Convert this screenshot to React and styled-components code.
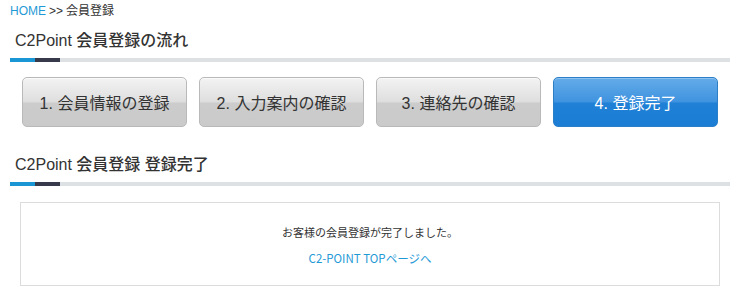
import React from "react";
import styled, { createGlobalStyle } from "styled-components";

const Global = createGlobalStyle`
  html, body { margin: 0; padding: 0; background: #fff; }
  body { font-family: "Liberation Sans", "Noto Sans CJK JP", sans-serif; color: #333; }
`;

const Page = styled.div`
  width: 720px;
  padding: 0 8px 0 10px;
`;

const Breadcrumb = styled.div`
  height: 22px;
  display: flex;
  align-items: center;
  font-size: 12px;
  color: #333;
  line-height: 22px;
  a { color: #1f9ad6; text-decoration: none; }
  span { margin: 0 3px; }
`;

const Heading = styled.div`
  padding-top: ${(p) => p.$top}px;
`;

const HeadingText = styled.h2`
  margin: 0;
  padding-left: 5px;
  font-size: 16px;
  font-weight: 500;
  color: #333;
  height: 34px;
  line-height: 34px;
`;

const Bar = styled.div`
  display: flex;
  height: 4px;
  background: #dde1e3;
`;

const BarSeg = styled.div`
  width: 25px;
  background: ${(p) => p.$c};
`;

const Steps = styled.div`
  display: flex;
  gap: 12px;
  padding: 15px 12px 0;
`;

const Step = styled.div`
  width: 165px;
  height: 50px;
  box-sizing: border-box;
  border-radius: 5px;
  display: flex;
  align-items: center;
  justify-content: center;
  font-size: 16px;
  border: 1px solid ${(p) => (p.$active ? "#2a7fc8" : "#b9b9b9")};
  color: ${(p) => (p.$active ? "#fff" : "#333")};
  background: ${(p) =>
    p.$active
      ? "linear-gradient(to bottom, #64abe9 0%, #3f93df 50%, #1f80d6 52%, #1c7dd5 100%)"
      : "linear-gradient(to bottom, #f3f3f3 0%, #dedede 50%, #cccccc 52%, #cacaca 100%)"};
  box-shadow: inset 0 1px 0 ${(p) => (p.$active ? "#8cc3f0" : "#fafafa")};
`;

const Box = styled.div`
  margin: 16px 10px 0 10px;
  height: 84px;
  box-sizing: border-box;
  border: 1px solid #dcdcdc;
  display: flex;
  flex-direction: column;
  align-items: center;
  padding-top: 20px;
  font-family: "Noto Sans CJK JP", sans-serif;
  font-size: 11px;
`;

const Message = styled.p`
  margin: 0;
  height: 18px;
  line-height: 18px;
  color: #333;
`;

const Link = styled.a`
  margin-top: 8px;
  height: 18px;
  line-height: 18px;
  color: #1f9ad6;
  font-size: 11.5px;
  text-decoration: none;
`;

export default function App() {
  return (
    <>
      <Global />
      <Page>
        <Breadcrumb>
          <a href="#">HOME</a>
          <span>&gt;&gt;</span>会員登録
        </Breadcrumb>
        <Heading $top={2}>
          <HeadingText>C2Point 会員登録の流れ</HeadingText>
          <Bar>
            <BarSeg $c="#1a96d4" />
            <BarSeg $c="#363a4a" />
          </Bar>
        </Heading>
        <Steps>
          <Step>1. 会員情報の登録</Step>
          <Step>2. 入力案内の確認</Step>
          <Step>3. 連絡先の確認</Step>
          <Step $active>4. 登録完了</Step>
        </Steps>
        <Heading $top={21}>
          <HeadingText>C2Point 会員登録 登録完了</HeadingText>
          <Bar>
            <BarSeg $c="#1a96d4" />
            <BarSeg $c="#363a4a" />
          </Bar>
        </Heading>
        <Box>
          <Message>お客様の会員登録が完了しました。</Message>
          <Link href="#">C2-POINT TOPページへ</Link>
        </Box>
      </Page>
    </>
  );
}
